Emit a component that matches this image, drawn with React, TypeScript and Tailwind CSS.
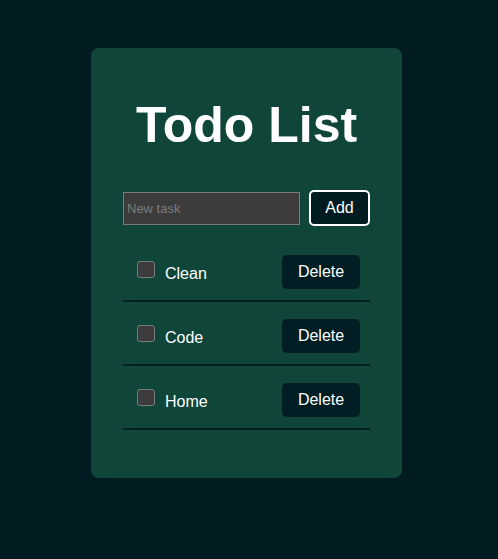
import { useState } from "react";

type Task = { id: number; text: string; done: boolean };

const initial: Task[] = [
  { id: 1, text: "Clean", done: false },
  { id: 2, text: "Code", done: false },
  { id: 3, text: "Home", done: false },
];

export default function App() {
  const [tasks, setTasks] = useState<Task[]>(initial);
  const [draft, setDraft] = useState("");

  const add = () => {
    if (!draft.trim()) return;
    setTasks([...tasks, { id: Date.now(), text: draft.trim(), done: false }]);
    setDraft("");
  };

  return (
    <div className="min-h-[559px] bg-[#001c21] pt-[48px] font-['Liberation_Sans',Arial,sans-serif]">
      <div className="ml-[91px] w-[311px] rounded-[8px] bg-[#0f4639] px-8 pt-[48px] pb-[48px]">
        <h1 className="text-center text-[50px] font-bold leading-[58px] text-white">Todo List</h1>

        <div className="mt-[36px] flex h-[36px] items-center gap-[9px]">
          <input
            value={draft}
            onChange={(e) => setDraft(e.target.value)}
            placeholder="New task"
            className="h-[33px] w-[177px] border border-[#7a7a7a] bg-[#3c3c3c] px-[3px] text-[13px] text-white outline-none placeholder:text-[#7b7b7b]"
          />
          <button
            onClick={add}
            className="h-[36px] w-[62px] rounded-[5px] border-2 border-white bg-[#001c21] text-[16px] text-white"
          >
            Add
          </button>
        </div>

        <ul className="mt-[12px]">
          {tasks.map((t) => (
            <li
              key={t.id}
              className="flex items-center border-b-2 border-[#01211f] pt-[17px] pb-[11px] pl-[14px] pr-[10px]"
            >
              <input
                type="checkbox"
                checked={t.done}
                onChange={() =>
                  setTasks(tasks.map((x) => (x.id === t.id ? { ...x, done: !x.done } : x)))
                }
                className="mb-[6px] h-[17px] w-[18px] appearance-none rounded-[3px] border border-[#7a7a7a] bg-[#3c3c3c] checked:bg-[#8ab4a8]"
              />
              <span className="ml-[10px] mt-[3px] text-[16px] text-white">{t.text}</span>
              <button
                onClick={() => setTasks(tasks.filter((x) => x.id !== t.id))}
                className="ml-auto h-[34px] w-[78px] rounded-[5px] bg-[#001e23] text-[16px] text-white"
              >
                Delete
              </button>
            </li>
          ))}
        </ul>
      </div>
    </div>
  );
}
